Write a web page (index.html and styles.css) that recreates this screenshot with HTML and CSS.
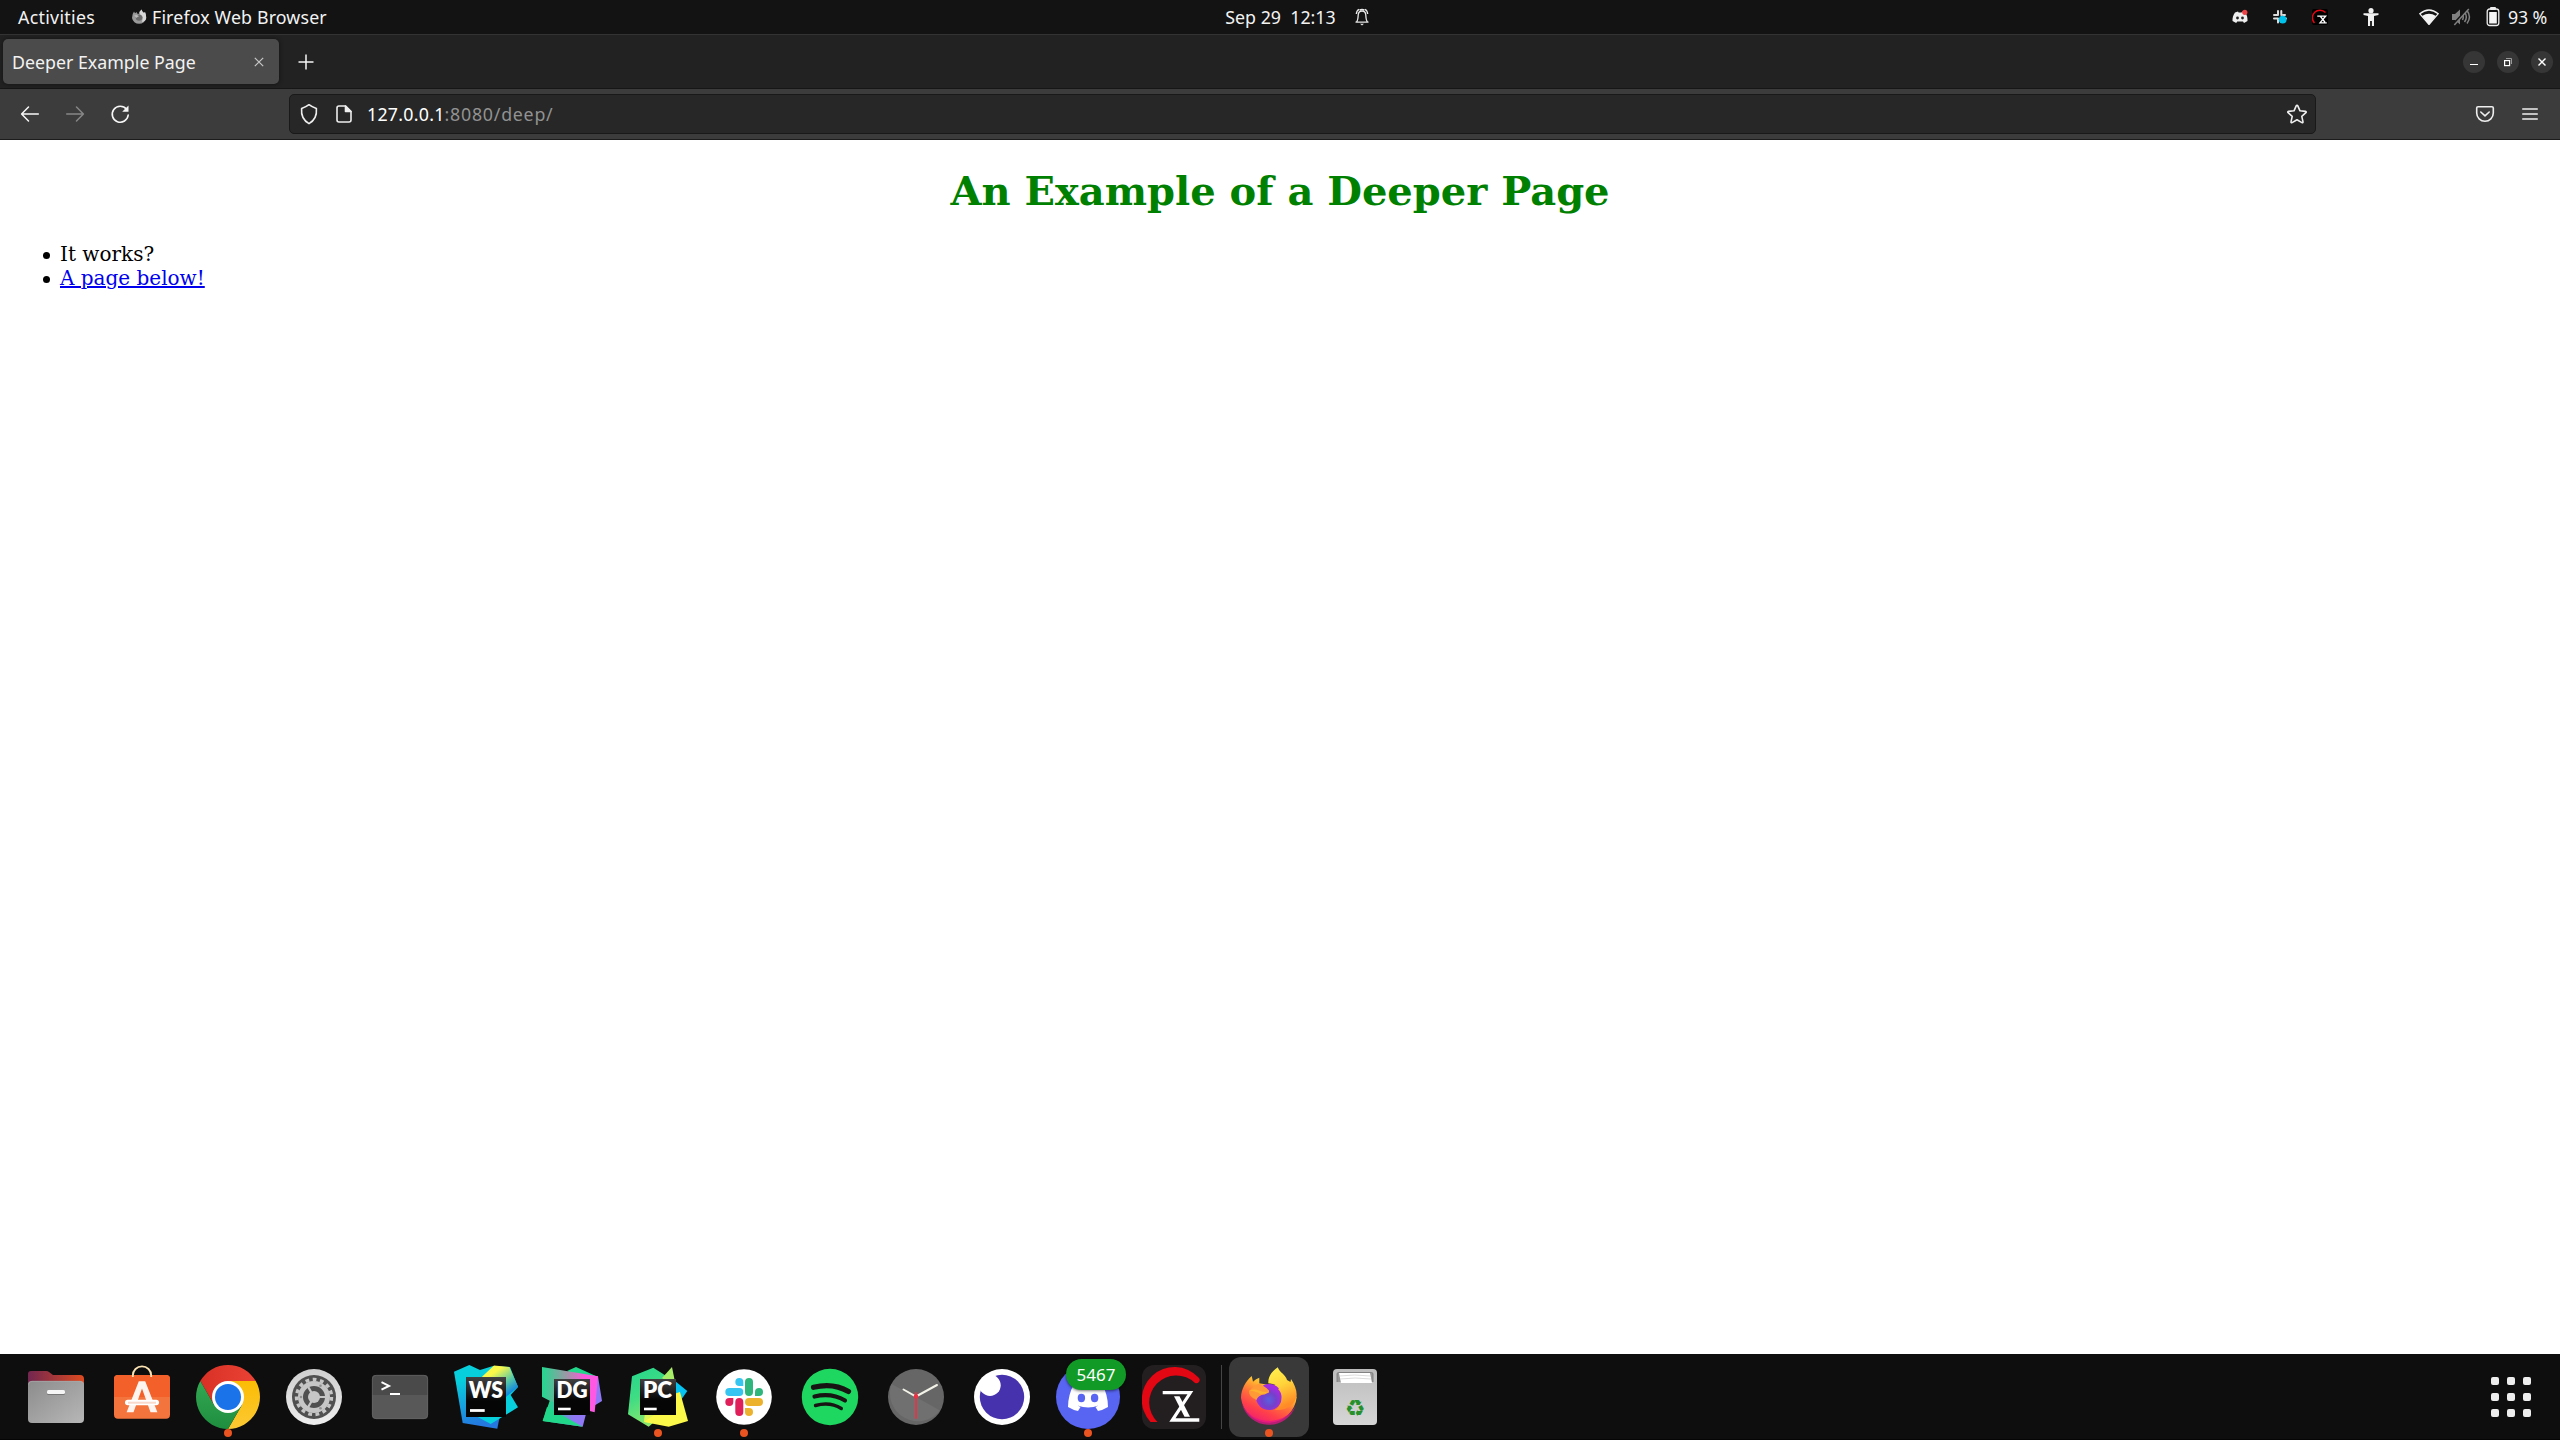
FILE: index.html
```html
<!DOCTYPE html>
<html lang="en">
<head>
<meta charset="utf-8">
<title>Deeper Example Page</title>
<link rel="stylesheet" href="styles.css">
</head>
<body>
<div class="desktop">
  <header class="topbar">
    <div class="topbar-left">
      <span class="activities">Activities</span>
      <svg class="app-icon" width="16" height="16" viewBox="0 0 16 16"><path d="M1 9Q1 5 3 2.500L4 4.300 5.800 3 6 4.500 8.500 5Q8 2.500 10.500 .5q.5 2 2.500 3.500L14 3q1.300 3 1.200 6A7.200 7 0 0 1 1 9z" fill="#9a9a9a"/><path d="M8.500 5Q8 2.500 10.500 .5q.5 2 2.500 3.500L14 3q1.300 3 1.200 6Q15 12 11 13l1-5z" fill="#d8d8d8"/><circle cx="8" cy="8.600" r="3.200" fill="#6a6a6a"/><path d="M3 6.500q3-1.500 5 .8Q6 8 5.800 9z" fill="#bbb"/></svg>
      <span class="app-name">Firefox Web Browser</span>
    </div>
    <div class="clock">
      <span class="clock-text">Sep 29&nbsp; 12:13</span>
      <svg width="14" height="18" viewBox="0 0 14 18" fill="none" stroke="#e8e8e8" stroke-width="1.300"><path d="M1.500 14c1.500-1.500 1.500-3 1.700-7C3.400 4 5 3 7 3s3.600 1 3.800 4c.2 4 .2 5.500 1.700 7M.5 14.200h13M1.300 6C1.500 3.500 2.500 2 4 1.300M12.700 6C12.500 3.500 11.500 2 10 1.300M4.500 1.800Q7 .8 9.500 1.800"/><path d="M5 15.800h4l-2 1.800z" fill="#e8e8e8" stroke="none"/></svg>
    </div>
    <div class="tray">
      <svg class="t-discord" width="18" height="16" viewBox="0 0 18 16"><path d="M4 3.500L7 2.500l.6 1h3l.7-1 3 1c1.700 2.500 2.400 5.500 2.200 8.500l-3.500 2-1-1.500H6.200l-1 1.500-3.700-2C1.300 9 2.200 6 4 3.500z" fill="#eee"/><circle cx="6.500" cy="9" r="1.400" fill="#222"/><circle cx="11.500" cy="9" r="1.400" fill="#222"/><circle cx="13.800" cy="3.300" r="2.600" fill="#ed4245"/></svg>
      <svg class="t-slack" width="16" height="16" viewBox="0 0 16 16"><g stroke="#ddd" stroke-width="2" stroke-linecap="round"><path d="M6 2v4M9.300 2v4M2 6h3M11 6h2M2 9.500h4M6 11v2.500M9 9v4M13 9.500h1"/></g><circle cx="10.700" cy="10.600" r="3.900" fill="#00c1ea"/></svg>
      <svg class="t-zx" width="16" height="16" viewBox="0 0 64 64"><rect width="64" height="64" rx="8" fill="#000"/><path d="M10 56A27 27 0 0 1 54 14" fill="none" stroke="#e30613" stroke-width="6"/><path d="M21 28h34L32 55h27M34 30l18 23" fill="none" stroke="#fff" stroke-width="5"/></svg>
      <svg class="t-access" width="16" height="18" viewBox="0 0 16 18" fill="#f2f2f2"><circle cx="8" cy="2.700" r="2.600"/><path d="M.5 5.300h15v1.600L11 8v10H8.900v-5H7.100v5H5V8L.5 6.900z"/></svg>
      <svg class="t-wifi" width="20" height="16" viewBox="0 0 20 16"><path d="M.8 4.800Q10-2.800 19.200 4.800L10 15.500z" fill="none" stroke="#f2f2f2" stroke-width="1.300"/><path d="M3 7Q10 2.500 17 7l-7 8.600z" fill="#f2f2f2"/></svg>
      <svg class="t-mute" width="20" height="18" viewBox="0 0 20 18" fill="none" stroke="#808080" stroke-width="1.500"><path d="M1 6h3l5-4.500v15L4 12H1z" fill="#808080" stroke="none"/><path d="M11.500 6c1 2 1 4 0 6M13.500 4c2.200 3 2.200 7 0 10M16 2.500c3 4 3 9 0 13"/><path d="M17 .5L2 16.500" stroke="#131313" stroke-width="2"/><path d="M17.800 1L3.300 17"/></svg>
      <svg class="t-battery" width="14" height="20" viewBox="0 0 14 20"><rect x="4" y="0" width="6" height="3" rx="1" fill="#eee"/><rect x="1.200" y="2" width="11.600" height="16.500" rx="2.500" fill="none" stroke="#eee" stroke-width="1.300"/><rect x="3.200" y="5" width="7.600" height="11.500" fill="#f5f5f5"/></svg>
      <span class="percent">93 %</span>
    </div>
  </header>

  <div class="tabstrip">
    <div class="tab"><span>Deeper Example Page</span>
      <svg width="10" height="10" viewBox="0 0 10 10" stroke="#c8c8c8" stroke-width="1.200"><path d="M.8.8l8.400 8.400M9.200.8L.8 9.200"/></svg>
    </div>
    <svg class="new-tab" width="16" height="16" viewBox="0 0 16 16" stroke="#f5f5f5" stroke-width="1.500"><path d="M8 .5v15M.5 8h15"/></svg>
    <div class="window-buttons">
      <svg width="22" height="22" viewBox="0 0 22 22"><circle cx="11" cy="11" r="11" fill="#363636"/><path d="M7 13.500h8" stroke="#fff"/></svg>
      <svg width="22" height="22" viewBox="0 0 22 22" fill="none"><circle cx="11" cy="11" r="11" fill="#363636"/><path d="M9 7.500h5.500V13" stroke="#999"/><rect x="7.600" y="9.600" width="5" height="5" stroke="#fff" stroke-width="1.200"/></svg>
      <svg width="22" height="22" viewBox="0 0 22 22"><circle cx="11" cy="11" r="11" fill="#363636"/><path d="M7.500 7.500l7 7M14.500 7.500l-7 7" stroke="#fff" stroke-width="1.400"/></svg>
    </div>
  </div>

  <div class="toolbar">
    <div class="nav">
      <svg width="20" height="20" viewBox="0 0 20 20" fill="none" stroke="#f7f7f7" stroke-width="1.500" stroke-linecap="round" stroke-linejoin="round"><path d="M18.300 10H1.800M8.500 3L1.600 10l6.900 7"/></svg>
      <svg width="20" height="20" viewBox="0 0 20 20" fill="none" stroke="#868686" stroke-width="1.500" stroke-linecap="round" stroke-linejoin="round"><path d="M1.700 10h16.500M11.500 3l6.900 7-6.900 7"/></svg>
      <svg width="20" height="20" viewBox="0 0 20 20" fill="none" stroke="#f7f7f7" stroke-width="1.600" stroke-linecap="round"><path d="M16.500 5.200A8 8 0 1 0 18.200 11"/><path d="M18.500 1.500v6.300h-6.300z" fill="#f7f7f7" stroke="none"/></svg>
    </div>
    <div class="urlbar">
      <svg class="shield" width="20" height="22" viewBox="0 0 20 22" fill="none" stroke="#eee" stroke-width="1.600" stroke-linejoin="round"><path d="M10 1.700Q13 4 17.400 5.500C18 12 15.500 17.500 10 20.600 4.500 17.500 2 12 2.600 5.500Q7 4 10 1.700z"/></svg>
      <svg class="doc" width="16" height="18" viewBox="0 0 16 18" fill="none" stroke="#eee" stroke-width="1.600" stroke-linejoin="round"><path d="M3 1h6.500L15 6.500V15q0 2-2 2H3q-2 0-2-2V3q0-2 2-2z"/><path d="M9.500 1v5.500H15z" fill="#eee"/></svg>
      <span class="url"><span class="host">127.0.0.1</span><span class="path">:8080/deep/</span></span>
      <svg class="star" width="22" height="22" viewBox="0 0 22 22" fill="none" stroke="#eee" stroke-width="1.600" stroke-linejoin="round"><path d="M11 2.200q.5 0 .8.700l2.200 4.900 5.500.6q1.300.3.400 1.300l-4.100 3.600 1.200 5.500q.1 1.300-1.100.8L11 16.800l-4.900 2.800q-1.200.5-1.100-.8l1.200-5.500L2.100 9.700q-.9-1 .4-1.300L8 7.800l2.200-4.900q.3-.7.800-.7z"/></svg>
    </div>
    <svg class="pocket" width="20" height="18" viewBox="0 0 20 18" fill="none" stroke="#eee" stroke-width="1.600" stroke-linecap="round" stroke-linejoin="round"><path d="M3 1.800h14q1.300 0 1.300 1.300V8a8.300 8.300 0 0 1-16.600 0V3.100Q1.700 1.800 3 1.800z"/><path d="M5.800 7L10 10.800 14.200 7"/></svg>
    <svg class="menu" width="16" height="14" viewBox="0 0 16 14" stroke="#eee" stroke-width="1.500" stroke-linecap="round"><path d="M.7 2h14.600M.7 7h14.600M.7 12h14.600"/></svg>
  </div>

  <main class="page">
    <h1>An Example of a Deeper Page</h1>
    <ul>
      <li>It works?</li>
      <li><a href="#">A page below!</a></li>
    </ul>
  </main>

  <footer class="dock">
    <div class="item">
      <svg class="icon" viewBox="0 0 64 64"><defs><linearGradient id="fb"><stop stop-color="#712650"/><stop offset="1" stop-color="#dd4a20"/></linearGradient><linearGradient id="ff" x2="1" y2="1"><stop stop-color="#8c8c8c"/><stop offset="1" stop-color="#b7b7b7"/></linearGradient></defs><path d="M4 20V9q0-3 3-3h15q2 0 3 1l4 3h27q4 0 4 4v8z" fill="url(#fb)"/><rect x="4" y="16" width="56" height="42" rx="4" fill="url(#ff)"/><path d="M4.500 19.500q0-3.200 3.500-3.200h48q3.500 0 3.500 3.200" fill="none" stroke="#aaa" stroke-width=".7"/><rect x="23" y="26" width="18" height="4" rx="1.500" fill="#777"/><rect x="23" y="25" width="18" height="4" rx="1.500" fill="#f5f5f5"/></svg>
    </div>
    <div class="item">
      <svg class="icon" viewBox="0 0 64 64"><rect x="4" y="10" width="56" height="43.700" rx="4" fill="#f4743e"/><path d="M4 32V14q0-4 4-4h48q4 0 4 4v18z" fill="#f4602a"/><path d="M22.800 12v-1.500a9.200 9.200 0 0 1 18.400 0V12" fill="none" stroke="#fbe3b4" stroke-width="1.800"/><path d="M28.800 16.300h6.400l12.200 31H40.500L32 23.500 23.500 47.300H16.600z" fill="#fdf4ef"/><rect x="15" y="34.700" width="34" height="5.600" rx="2.800" fill="#fff"/><path d="M18 37.700h28" stroke="#f9d9cb" stroke-width="2"/></svg>
    </div>
    <div class="item running">
      <svg class="icon" viewBox="0 0 64 64"><defs><linearGradient id="cr"><stop stop-color="#d93025"/><stop offset="1" stop-color="#ea4335"/></linearGradient><linearGradient id="cg" x2="0" y2="1"><stop stop-color="#34a853"/><stop offset="1" stop-color="#1e8e3e"/></linearGradient><linearGradient id="cy" x2="0" y2="1"><stop stop-color="#fbbc04"/><stop offset="1" stop-color="#fcc934"/></linearGradient></defs><path d="M18.100 40L4.300 16A32 32 0 0 1 59.700 16H32z" fill="url(#cr)"/><path d="M32 16h27.700A32 32 0 0 1 32 64l13.900-24z" fill="url(#cy)"/><path d="M4.300 16L18.100 40 32 48l13.900-8L32 64A32 32 0 0 1 4.300 16z" fill="url(#cg)"/><circle cx="32" cy="32" r="16" fill="#fff"/><circle cx="32" cy="32" r="13" fill="#1a73e8"/></svg>
    </div>
    <div class="item">
      <svg class="icon" viewBox="0 0 64 64"><defs><linearGradient id="sg" x2="0" y2="1"><stop stop-color="#cfcfcf"/><stop offset="1" stop-color="#eee"/></linearGradient></defs><circle cx="32" cy="32" r="28" fill="url(#sg)"/><circle cx="32" cy="32" r="22" fill="#505050"/><circle cx="32" cy="32" r="17.500" fill="none" stroke="#c6c6c6" stroke-width="3.400" stroke-dasharray="3.800 3.530"/><circle cx="32" cy="32" r="13.500" fill="none" stroke="#c6c6c6" stroke-width="5"/><path d="M32 32h12M32 32l-6-10.400M32 32l-6 10.400" stroke="#c6c6c6" stroke-width="2.200"/><circle cx="32" cy="32" r="6" fill="#c6c6c6"/><g fill="#909090"><circle cx="19" cy="32" r="1.300"/><circle cx="38.500" cy="20.700" r="1.300"/><circle cx="38.500" cy="43.300" r="1.300"/></g></svg>
    </div>
    <div class="item">
      <svg class="icon" viewBox="0 0 64 64"><rect x="4" y="10" width="56" height="44" rx="4" fill="#585858"/><path d="M4 30V14q0-4 4-4h48q4 0 4 4v16z" fill="#4a4a4a"/><rect x="4.300" y="10.300" width="55.400" height="43.400" rx="4" fill="none" stroke="#6a6a6a" stroke-width=".6"/><path d="M13.500 17.200l7.500 3.700-7.500 3.700" fill="none" stroke="#fff" stroke-width="2"/><path d="M22 29h10" stroke="#fff" stroke-width="2"/></svg>
    </div>
    <div class="item">
      <svg class="icon" viewBox="0 0 64 64"><defs><linearGradient id="w1" x2=".2" y2="1"><stop offset=".25" stop-color="#07cfdc"/><stop offset="1" stop-color="#2478df"/></linearGradient><linearGradient id="w2" x2=".8" y2="1"><stop offset=".3" stop-color="#fcf84a"/><stop offset=".65" stop-color="#58c9a4"/><stop offset=".9" stop-color="#168bdd"/></linearGradient><linearGradient id="blk" x2="0" y2="1"><stop stop-color="#414141"/><stop offset=".6" stop-color="#050505"/></linearGradient></defs><path d="M0 6.700L15.300 0l17 8L50 30l-6.700 33.700L8.700 58z" fill="url(#w1)"/><path d="M26 5l13-4 17 1 8 20-7.300 8L64 42.300 36.700 59 20 50z" fill="#07cfdc"/><path d="M28 11.700L40 .5l15.300 1.500L64 21.700 52 32z" fill="url(#w2)"/><path d="M12 12h40v40H12z" fill="url(#blk)"/><text class="jb" x="32" y="32.700" textLength="34.500" lengthAdjust="spacingAndGlyphs">WS</text><path d="M16 45.500h14.700" stroke="#fff" stroke-width="2.800"/></svg>
    </div>
    <div class="item">
      <svg class="icon" viewBox="0 0 64 64"><defs><linearGradient id="d1"><stop stop-color="#22d88f"/><stop offset=".45" stop-color="#9f96a6"/><stop offset=".75" stop-color="#ff57dc"/><stop offset="1" stop-color="#ff59e6"/></linearGradient><linearGradient id="d2" x2="1" y2=".1"><stop offset=".15" stop-color="#21d789"/><stop offset=".6" stop-color="#9077f5"/></linearGradient></defs><path d="M27 6l9-4 22 10-8 8z" fill="#21d789"/><path d="M10 35L58 11.300 62 36l-15 9-4.300 16.700L2.700 56z" fill="url(#d2)"/><path d="M7 42l35.700 19.700-40-5.700z" fill="#21d789"/><path d="M2 2l56 9.300-3.300 36-44-11L2 31.700z" fill="url(#d1)"/><path d="M14 14h36v36H14z" fill="url(#blk)"/><text class="jb" x="32" y="33" textLength="31" lengthAdjust="spacingAndGlyphs">DG</text><path d="M18 44h12.700" stroke="#fff" stroke-width="2.600"/></svg>
    </div>
    <div class="item running">
      <svg class="icon" viewBox="0 0 64 64"><defs><linearGradient id="p1" x2=".4" y2="1"><stop stop-color="#22d78c"/><stop offset=".5" stop-color="#40dc84"/><stop offset="1" stop-color="#8de86b"/></linearGradient></defs><path d="M49 16l12.300 10L55 35 45 34z" fill="#07c3f2"/><path d="M6 11.300l21.300-8.600L45 14 36 50 22.700 61.700 2 49.300z" fill="url(#p1)"/><path d="M36 13L46 2l4 20z" fill="#a9ee68"/><path d="M18 57l5-20 31-10 8 29-19.300 5.700z" fill="#fcf84a"/><path d="M18 57l1-10 25-8z" fill="#dff455"/><path d="M14 14h36v36H14z" fill="url(#blk)"/><text class="jb" x="31.500" y="33" textLength="29" lengthAdjust="spacingAndGlyphs">PC</text><path d="M18 44h12.700" stroke="#fff" stroke-width="2.600"/></svg>
    </div>
    <div class="item running">
      <svg class="icon" viewBox="0 0 64 64"><circle cx="32" cy="32" r="27.800" fill="#fff"/><g fill="#36c5f0"><rect x="13.300" y="23" width="18" height="8" rx="4"/><path d="M31.300 21h-4a4 4 0 1 1 4-4z"/></g><g fill="#2eb67d"><rect x="33" y="13" width="8" height="18" rx="4"/><path d="M43 31v-4a4 4 0 1 1 4 4z"/></g><g fill="#ecb22e"><rect x="33" y="33" width="18" height="8" rx="4"/><path d="M33 43h4a4 4 0 1 1-4 4z"/></g><g fill="#e01e5a"><rect x="23.300" y="33" width="8" height="18" rx="4"/><path d="M21.300 33v4a4 4 0 1 1-4-4z"/></g></svg>
    </div>
    <div class="item">
      <svg class="icon" viewBox="0 0 64 64"><circle cx="32" cy="32" r="28.200" fill="#1ed760"/><g fill="none" stroke="#191414" stroke-linecap="round"><path d="M15.500 22.300Q35 17.300 50.500 26.500" stroke-width="5.200"/><path d="M16.500 31.500Q33.500 27.500 47 35.500" stroke-width="4.200"/><path d="M17.500 40.500Q32 36.500 43.300 43.500" stroke-width="3.400"/></g></svg>
    </div>
    <div class="item">
      <svg class="icon" viewBox="0 0 64 64"><circle cx="32" cy="32" r="28" fill="#666"/><path d="M7.500 19L32 32l24 13.500A28 28 0 0 1 7.500 19z" fill="#707070"/><g stroke-linecap="round"><path d="M19.500 24.500L32 31.500 53 20" fill="none" stroke="#f2f2e8" stroke-width="2"/><path d="M32 28v25" stroke="#ed3146" stroke-width="1.800"/></g><circle cx="32" cy="31.500" r="2.300" fill="#ed3146"/></svg>
    </div>
    <div class="item">
      <svg class="icon" viewBox="0 0 64 64"><circle cx="32" cy="32" r="28" fill="#fff"/><circle cx="32" cy="32" r="22.200" fill="#4632ad"/><circle cx="20" cy="20.300" r="10.700" fill="#fff"/></svg>
    </div>
    <div class="item running">
      <svg class="icon" viewBox="0 0 64 64"><circle cx="32" cy="32" r="32" fill="#5865f2"/><path d="M18 19Q24 16 27 16l1.500 3h7L37 16q4 .5 9 3 6 11 6 23-5 3-10 4l-2.500-4 3-1.500q-10 4-21 0l3 1.500-2.500 4Q17 45 12 42q0-12 6-23z" fill="#fff"/><ellipse cx="25.400" cy="33" rx="3.700" ry="4.200" fill="#5865f2"/><ellipse cx="38.600" cy="33" rx="3.700" ry="4.200" fill="#5865f2"/></svg>
      <span class="badge">5467</span>
    </div>
    <div class="item">
      <svg class="icon" viewBox="0 0 64 64"><rect width="64" height="64" rx="12" fill="#231f20"/><path d="M8.500 57A32.600 32.600 0 0 1 56.500 12.500a3.300 3.300 0 0 1-3.500 5.500A26.300 26.300 0 0 0 15.500 57z" fill="#e30613"/><path d="M20.700 26h30.600L33.500 53.300h23.800v3.400H27.300L45.500 29.300H20.700z" fill="#fff"/><path d="M32 31.300h5.500L48 51.700h-5.500z" fill="#fff"/></svg>
    </div>
    <div class="separator"></div>
    <div class="item running active">
      <svg class="icon" viewBox="0 0 64 64"><defs><linearGradient id="x1" x1=".8" y1=".1" x2=".3" y2="1"><stop stop-color="#fff44f"/><stop offset=".25" stop-color="#ffbd2f"/><stop offset=".5" stop-color="#ff7139"/><stop offset=".75" stop-color="#ff3f4b"/><stop offset="1" stop-color="#f0206e"/></linearGradient><radialGradient id="x2" cx=".5" cy=".62"><stop stop-color="#5a5fe0"/><stop offset=".55" stop-color="#7540c9"/><stop offset="1" stop-color="#a32be0"/></radialGradient><linearGradient id="x3" x2=".3" y2="1"><stop stop-color="#fff44f"/><stop offset=".5" stop-color="#ffd43a"/><stop offset="1" stop-color="#ff8a27"/></linearGradient></defs><path d="M4 33c0-9 5-17 10.700-22l1.300 5.700q3-3 6.300-4V18.300L32 20l19 0 8.700 12A28 28 0 0 1 4 33z" fill="url(#x1)"/><path d="M5 39Q13 56 34 56 51 54 58.500 41A28 28 0 0 1 5 39z" fill="#e31587" opacity=".75"/><circle cx="32" cy="32" r="13" fill="url(#x2)"/><path d="M40.700 2.300C34 7 31 12 31.300 18.300q7 0 12 5L41 24q4 4 3.500 9c0 6-3 10-7 12 13 1 21-6 22.200-15 0-6-2.500-11-5.700-16l-.5 3L50 15C49 10 43 8 40.700 2.300z" fill="url(#x3)"/><path d="M21 19q4-.5 11 6.500v2q-5 2.500-7.500 2.500-4 1.500-5 5Q11 31 12 26l5-5z" fill="#ff9a36"/><path d="M12 25.500q6-2 10 0t9.500 1.500Q28 29.500 23 29q-3-2.500-11-3.500z" fill="#ffb22f"/></svg>
    </div>
    <div class="item">
      <svg class="icon" viewBox="0 0 64 64"><defs><linearGradient id="tr" x2="0" y2="1"><stop stop-color="#bdbdbd"/><stop offset="1" stop-color="#d6d6d6"/></linearGradient></defs><rect x="10" y="4" width="44" height="56" rx="4" fill="url(#tr)"/><path d="M14 17V9q0-1.500 1.500-1.500h33Q50 7.500 50 9v8" fill="#999" stroke="#777" stroke-width=".8"/><path d="M16 8h31l2 10H18z" fill="#fff"/><path d="M16 11q15-2 32 0M17 14q15-2 31 0" fill="none" stroke="#ccc" stroke-width=".7"/><text class="recycle" x="32" y="50.500">♻</text></svg>
    </div>
    <div class="apps"><i></i><i></i><i></i><i></i><i></i><i></i><i></i><i></i><i></i></div>
  </footer>
</div>
</body>
</html>
```
FILE: styles.css
```css
* { box-sizing: border-box; }
body { margin: 0; background: #fff; }
svg { display: block; flex: none; }

.desktop {
  width: 2560px;
  height: 1440px;
  display: flex;
  flex-direction: column;
  overflow: hidden;
  font: 17.8px/24px "Noto Sans", "Open Sans", sans-serif;
  color: #f2f2f2;
}

/* system bar */
.topbar {
  height: 34px;
  display: grid;
  grid-template-columns: 1fr auto 1fr;
  align-items: center;
  background: #131313;
}
.topbar-left { display: flex; align-items: center; padding-left: 18px; }
.activities { width: 113px; letter-spacing: .3px; }
.app-icon { margin-right: 5px; }
.app-name { letter-spacing: .15px; }
.clock { display: flex; align-items: center; gap: 19px; padding-left: 34px; }
.clock-text { white-space: nowrap; }
.tray { display: flex; align-items: center; justify-content: flex-end; padding-right: 13px; }
.t-slack { margin-left: 23px; }
.t-zx { margin-left: 24px; }
.t-access { margin-left: 35px; }
.t-wifi { margin-left: 40px; }
.t-mute { margin-left: 12px; }
.t-battery { margin: 0 8px 0 15px; }
.percent { letter-spacing: -.2px; }

/* browser chrome */
.tabstrip {
  height: 55px;
  display: flex;
  align-items: center;
  padding: 0 7px 0 3px;
  background: #222;
  border-top: 1px solid #333;
  border-bottom: 1px solid #161616;
}
.tab {
  width: 276px;
  height: 45px;
  display: flex;
  align-items: center;
  justify-content: space-between;
  padding: 0 15px 0 9px;
  border-radius: 5px;
  background: #4b4b4b;
  box-shadow: 0 0 4px #111;
}
.new-tab { margin-left: 19px; }
.window-buttons { display: flex; gap: 12px; margin-left: auto; }

.toolbar {
  height: 51px;
  display: flex;
  align-items: center;
  padding: 0 22px 0 20px;
  background: #3c3c3c;
  border-bottom: 1px solid #1c1c1c;
}
.nav { display: flex; gap: 25px; width: 269px; }
.urlbar {
  width: 2027px;
  height: 40px;
  display: flex;
  align-items: center;
  padding: 0 7px 0 9px;
  border: 1px solid #191919;
  border-radius: 5px;
  background: #272727;
}
.doc { margin: 0 15px 0 17px; }
.url { flex: 1; color: #929292; }
.host { color: #fff; letter-spacing: .25px; }
.path { letter-spacing: .75px; }
.pocket { margin-left: 159px; }
.menu { margin-left: auto; }

/* document */
.page {
  flex: 1;
  display: flow-root;
  padding: 0 10px;
  background: #fff;
  color: #000;
  font: 20px/24px "DejaVu Serif", serif;
}
.page h1 { margin: 27px 0 28px; font-size: 40px; line-height: 47px; text-align: center; color: green; }
.page ul { margin: 0; padding-left: 50px; list-style: none; }
.page li { display: flex; align-items: center; }
.page li::before {
  content: "";
  width: 7px;
  height: 7px;
  margin: 2px 10px 0 -17px;
  border-radius: 50%;
  background: #000;
}
.page a { color: #00e; }

/* dock */
.dock {
  height: 86px;
  display: flex;
  align-items: center;
  padding-left: 13px;
  background: #0e0e0e;
  border-bottom: 1px solid #050505;
}
.item {
  position: relative;
  flex: none;
  width: 86px;
  height: 86px;
  display: grid;
  place-items: center;
}
.icon { position: relative; width: 64px; height: 64px; }
.running::after {
  content: "";
  position: absolute;
  left: 39px;
  top: 75px;
  width: 8px;
  height: 8px;
  border-radius: 50%;
  background: #e95420;
}
.active::before {
  content: "";
  position: absolute;
  inset: 3px;
  border-radius: 12px;
  background: #393939;
}
.badge {
  position: absolute;
  left: 21px;
  top: 5px;
  width: 60px;
  height: 31px;
  border-radius: 16px;
  background: #129a26;
  box-shadow: 0 1px 3px #0008;
  color: #fff;
  font-size: 17px;
  line-height: 31px;
  text-align: center;
}
.separator { width: 1px; height: 64px; margin: 0 4px; background: #454545; }
.jb {
  fill: #fff;
  font: 800 22px Lato, sans-serif;
  text-anchor: middle;
}
.recycle { fill: #26902a; font: 23px "DejaVu Sans", sans-serif; text-anchor: middle; }
.apps {
  display: grid;
  grid-template-columns: repeat(3, 8px);
  gap: 8px;
  margin-left: auto;
  margin-right: 29px;
}
.apps i { width: 8px; height: 8px; border-radius: 2px; background: #eee; }
```
